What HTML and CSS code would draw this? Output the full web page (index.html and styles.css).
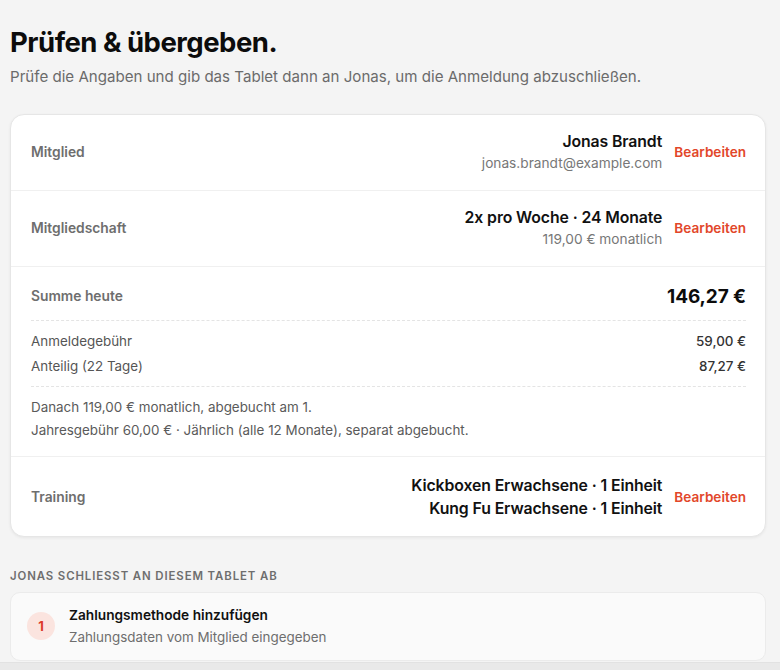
FILE: index.html
```html
<!DOCTYPE html>
<html lang="de">
<head>
<meta charset="utf-8">
<title>Prüfen & übergeben</title>
<link rel="stylesheet" href="styles.css">
</head>
<body>
<main class="page">
  <h1 class="title">Prüfen &amp; übergeben.</h1>
  <p class="subtitle">Prüfe die Angaben und gib das Tablet dann an Jonas, um die Anmeldung abzuschließen.</p>

  <section class="card">
    <div class="row">
      <div class="label">Mitglied</div>
      <div class="right">
        <div class="value">
          <div class="main">Jonas Brandt</div>
          <div class="sub">jonas.brandt@example.com</div>
        </div>
        <a class="edit">Bearbeiten</a>
      </div>
    </div>
    <div class="row">
      <div class="label">Mitgliedschaft</div>
      <div class="right">
        <div class="value">
          <div class="main">2x pro Woche · 24 Monate</div>
          <div class="sub">119,00 € monatlich</div>
        </div>
        <a class="edit">Bearbeiten</a>
      </div>
    </div>
    <div class="sum">
      <div class="sum-head">
        <div class="label">Summe heute</div>
        <div class="total">146,27 €</div>
      </div>
      <div class="lines">
        <div class="line"><span>Anmeldegebühr</span><span class="amt">59,00 €</span></div>
        <div class="line"><span>Anteilig (22 Tage)</span><span class="amt">87,27 €</span></div>
      </div>
      <div class="notes">
        <div>Danach 119,00 € monatlich, abgebucht am 1.</div>
        <div>Jahresgebühr 60,00 € · Jährlich (alle 12 Monate), separat abgebucht.</div>
      </div>
    </div>
    <div class="row row-training">
      <div class="label">Training</div>
      <div class="right">
        <div class="value">
          <div class="main">Kickboxen Erwachsene · 1 Einheit</div>
          <div class="main">Kung Fu Erwachsene · 1 Einheit</div>
        </div>
        <a class="edit">Bearbeiten</a>
      </div>
    </div>
  </section>

  <h2 class="section-label">Jonas schließt an diesem Tablet ab</h2>

  <section class="step">
    <div class="step-num">1</div>
    <div class="step-text">
      <div class="step-title">Zahlungsmethode hinzufügen</div>
      <div class="step-sub">Zahlungsdaten vom Mitglied eingegeben</div>
    </div>
  </section>
</main>
<div class="footer-band"></div>
</body>
</html>
```

FILE: styles.css
```css
* { box-sizing: border-box; }
html, body { margin: 0; padding: 0; }
body {
  background: #f4f4f4;
  font-family: Inter, "Noto Sans", "Liberation Sans", sans-serif;
  color: #111;
  width: 780px;
  height: 670px;
  overflow: hidden;
  position: relative;
}
.page {
  padding: 26px 14px 0 10px;
}
.title {
  margin: 0;
  font-size: 27.5px;
  font-weight: 700;
  letter-spacing: -0.5px;
  line-height: 32px;
  color: #0c0c0c;
}
.subtitle {
  margin: 9px 0 0;
  font-size: 15.1px;
  line-height: 20px;
  color: #6b6b6b;
}
.card {
  margin-top: 27px;
  background: #fff;
  border: 1px solid #e6e6e6;
  border-radius: 14px;
  box-shadow: 0 1px 3px rgba(0,0,0,0.06);
}
.row {
  display: flex;
  align-items: center;
  justify-content: space-between;
  padding: 16px 19px 17px 20px;
  border-bottom: 1px solid #f0f0f0;
  min-height: 76px;
}
.label {
  font-size: 13.8px;
  font-weight: 600;
  color: #6e6e6e;
}
.right {
  display: flex;
  align-items: center;
  gap: 12px;
}
.value {
  text-align: right;
}
.main {
  font-size: 15.8px;
  font-weight: 600;
  line-height: 22px;
  color: #111;
  letter-spacing: -0.1px;
}
.sub {
  font-size: 13.7px;
  line-height: 20px;
  color: #777;
}
.edit {
  font-size: 13.6px;
  font-weight: 600;
  color: #e2472a;
  cursor: pointer;
}
.sum {
  padding: 17px 19px 14px 20px;
  border-bottom: 1px solid #f0f0f0;
}
.sum-head {
  display: flex;
  justify-content: space-between;
  align-items: center;
  height: 24px;
}
.total {
  font-size: 19px;
  font-weight: 700;
  color: #0c0c0c;
  letter-spacing: -0.1px;
}
.lines {
  margin-top: 12px;
  border-top: 1px dashed #e4e4e4;
  border-bottom: 1px dashed #e4e4e4;
  padding: 8px 0 7px;
}
.line {
  display: flex;
  justify-content: space-between;
  font-size: 13.4px;
  line-height: 25px;
  color: #555;
}
.amt {
  font-weight: 500;
  color: #333;
}
.notes {
  padding-top: 9px;
  font-size: 13.4px;
  line-height: 23px;
  color: #5a5a5a;
}
.row-training {
  border-bottom: none;
  padding: 17px 19px 16px 20px;
  min-height: 79px;
}
.row-training .main {
  line-height: 23px;
}
.section-label {
  margin: 31px 0 0;
  font-size: 11.4px;
  font-weight: 600;
  text-transform: uppercase;
  letter-spacing: 0.9px;
  line-height: 16px;
  color: #6e6e6e;
}
.step {
  margin-top: 8px;
  display: flex;
  align-items: center;
  gap: 14px;
  background: #fafafa;
  border: 1px solid #ebebeb;
  border-radius: 10px;
  padding: 11px 16px 12px;
  height: 69px;
}
.step-num {
  width: 28px;
  height: 28px;
  border-radius: 50%;
  background: #fbe4df;
  color: #dc3a2a;
  font-size: 13px;
  font-weight: 700;
  display: flex;
  align-items: center;
  justify-content: center;
  flex: none;
}
.step-title {
  font-size: 13.7px;
  font-weight: 600;
  line-height: 22px;
  color: #111;
}
.step-sub {
  font-size: 13.4px;
  line-height: 22px;
  color: #6e6e6e;
}
.footer-band {
  position: absolute;
  left: 0;
  right: 0;
  bottom: 0;
  height: 8px;
  background: #e9e9e9;
  border-top: 1px solid #e2e2e2;
}
```
